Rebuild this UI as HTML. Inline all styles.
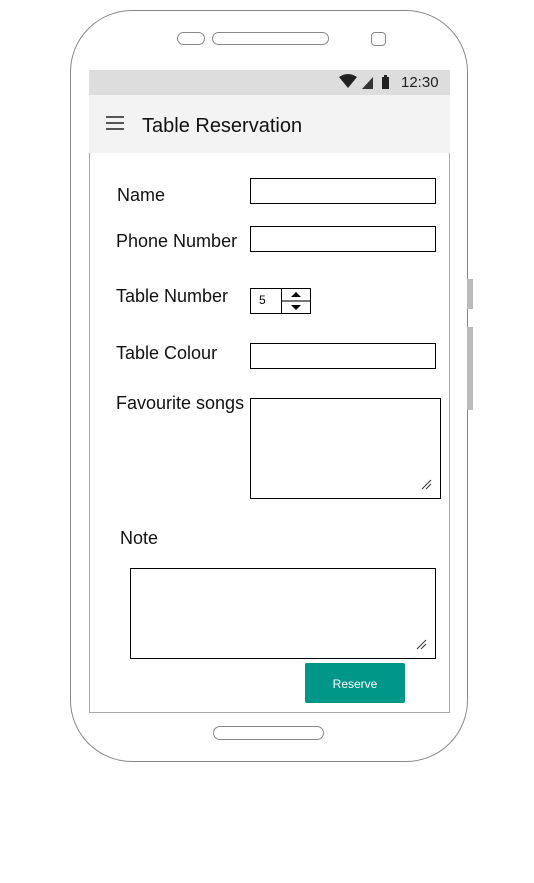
<!DOCTYPE html>
<html><head><style>
body{margin:0;width:534px;height:883px;background:#fff;position:relative;overflow:hidden;font-family:"Liberation Sans",sans-serif;}
.a{position:absolute;box-sizing:border-box;}
.lbl{position:absolute;font-size:18px;color:#111;white-space:nowrap;}
.in{position:absolute;border:1px solid #000;background:#fff;box-sizing:border-box;}
</style></head><body>
<div class="a" style="left:70px;top:10px;width:398px;height:752px;border:1px solid #888;border-radius:62px;"></div>
<div class="a" style="left:467px;top:279px;width:6px;height:30px;background:#bbb;"></div>
<div class="a" style="left:467px;top:327px;width:6px;height:83px;background:#bbb;"></div>
<div class="a" style="left:177px;top:32px;width:28px;height:13px;border:1px solid #888;border-radius:7px;"></div>
<div class="a" style="left:212px;top:32px;width:117px;height:13px;border:1px solid #888;border-radius:7px;"></div>
<div class="a" style="left:371px;top:32px;width:15px;height:14px;border:1px solid #888;border-radius:4px;"></div>
<div class="a" style="left:213px;top:726px;width:111px;height:14px;border:1px solid #888;border-radius:7px;"></div>
<div class="a" style="left:89px;top:70px;width:361px;height:643px;border:1px solid #aaa;border-top:none;background:#fff;"></div>
<div class="a" style="left:89px;top:70px;width:361px;height:25px;background:#ddd;"></div>
<svg class="a" style="left:338px;top:74px" width="60" height="16">
<path d="M1 3 Q10 -3 19 3 L10 14 Z" fill="#222"/>
<path d="M24 15 L35 3 L35 15 Z" fill="#333"/>
<rect x="44" y="3" width="7" height="12" fill="#222"/><rect x="46" y="1" width="3" height="2" fill="#222"/>
</svg>
<div class="a" style="left:401px;top:74px;font-size:15px;color:#222;">12:30</div>
<div class="a" style="left:89px;top:95px;width:361px;height:58px;background:#f3f3f3;"></div>
<div class="a" style="left:106px;top:116px;width:18px;height:2px;background:#555;"></div>
<div class="a" style="left:106px;top:122px;width:18px;height:2px;background:#555;"></div>
<div class="a" style="left:106px;top:128px;width:18px;height:2px;background:#555;"></div>
<div class="a" style="left:142px;top:115px;font-size:20px;color:#111;">Table Reservation</div>
<div class="lbl" style="left:117px;top:185px;">Name</div>
<div class="lbl" style="left:116px;top:231px;">Phone Number</div>
<div class="lbl" style="left:116px;top:286px;">Table Number</div>
<div class="lbl" style="left:116px;top:343px;">Table Colour</div>
<div class="lbl" style="left:116px;top:393px;">Favourite songs</div>
<div class="lbl" style="left:120px;top:528px;">Note</div>
<div class="in" style="left:250px;top:178px;width:186px;height:26px;"></div>
<div class="in" style="left:250px;top:226px;width:186px;height:26px;"></div>
<div class="in" style="left:250px;top:343px;width:186px;height:26px;"></div>
<div class="in" style="left:250px;top:288px;width:61px;height:26px;"></div>
<div class="a" style="left:281px;top:288px;width:1px;height:26px;background:#000;"></div>
<div class="a" style="left:282px;top:300px;width:28px;height:2px;background:#777;"></div>
<div class="a" style="left:259px;top:293px;font-size:12px;">5</div>
<svg class="a" style="left:289px;top:291px" width="14" height="20"><path d="M2 6 L7 1 L12 6Z M2 14 L12 14 L7 19Z" fill="#000"/></svg>
<div class="in" style="left:250px;top:398px;width:191px;height:101px;"></div>
<svg class="a" style="left:421px;top:479px" width="12" height="12"><path d="M1 10 L10 1 M5 10 L10 5" stroke="#333" stroke-width="1"/></svg>
<div class="in" style="left:130px;top:568px;width:306px;height:91px;"></div>
<svg class="a" style="left:416px;top:639px" width="12" height="12"><path d="M1 10 L10 1 M5 10 L10 5" stroke="#333" stroke-width="1"/></svg>
<div class="a" style="left:305px;top:663px;width:100px;height:40px;background:#009688;border-radius:2px;color:#fff;font-size:12px;text-align:center;line-height:42px;">Reserve</div>
</body></html>
